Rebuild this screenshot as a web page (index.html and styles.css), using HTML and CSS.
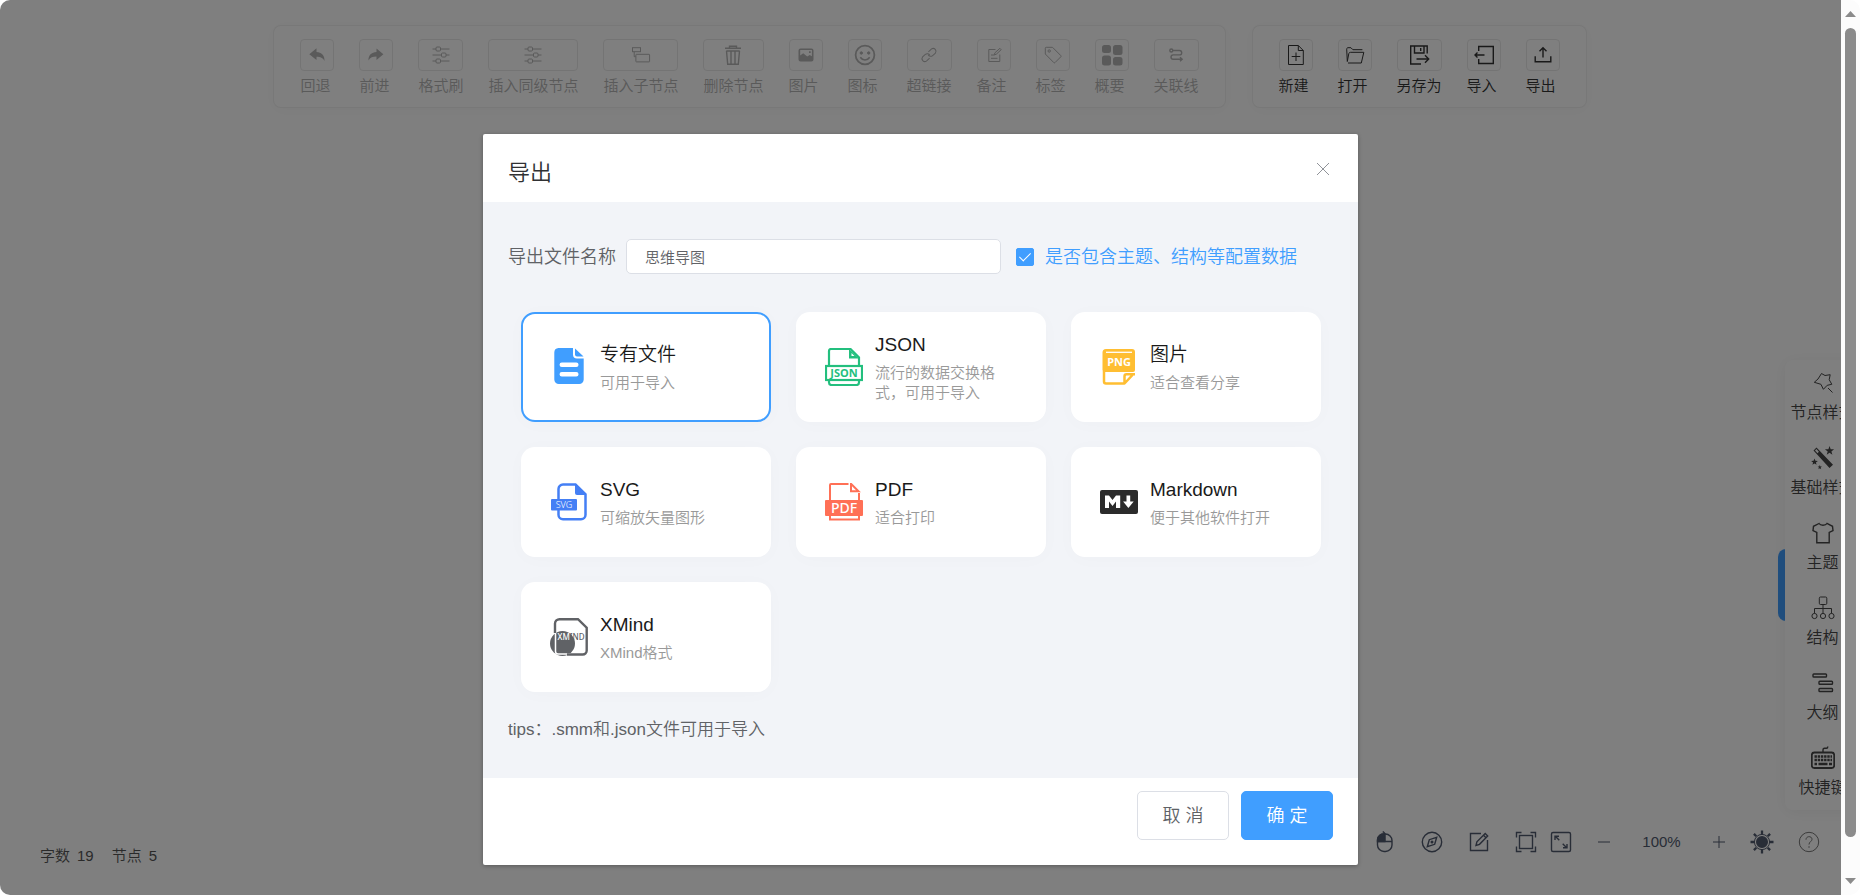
FILE: index.html
```html
<!DOCTYPE html>
<html lang="zh-CN">
<head>
<meta charset="utf-8">
<meta name="viewport" content="width=device-width, initial-scale=1">
<title>思维导图</title>
<link rel="stylesheet" href="styles.css">
</head>
<body>
<div class="app">
  <header class="toolbar">
    <div class="toolbar-block toolbar-disabled">
      <button class="tool" disabled><span class="tool-icon"><svg viewBox="0 0 22 22"><path fill="currentColor" d="M10.500 4.200V8c5 .2 8.300 3.200 8 9-1.600-3.200-4-4.200-8-4.200V16L3.300 10.200z"/></svg></span><span>回退</span></button>
      <button class="tool" disabled><span class="tool-icon"><svg viewBox="0 0 22 22"><path fill="currentColor" d="M11.500 4.500V8c-5 .2-8.200 3.200-8 8.500 1.700-3 4.200-3.900 8-3.900V16l6.900-5.800z"/></svg></span><span>前进</span></button>
      <button class="tool" disabled><span class="tool-icon"><svg viewBox="0 0 22 22" class="line"><path d="M2.500 5H6M10.500 5h9M2.500 11h9M16 11h3.500M2.500 17H6M10.500 17h9"/><rect x="6" y="3" width="4.500" height="4" rx="1"/><rect x="11.500" y="9" width="4.500" height="4" rx="1"/><rect x="6" y="15" width="4.500" height="4" rx="1"/></svg></span><span>格式刷</span></button>
      <button class="tool" disabled><span class="tool-icon"><svg viewBox="0 0 22 22" class="line"><path d="M2.500 5H6M10.500 5h9M2.500 11h9M16 11h3.500M2.500 17H6M10.500 17h9"/><rect x="6" y="3" width="4.500" height="4" rx="1"/><rect x="11.500" y="9" width="4.500" height="4" rx="1"/><rect x="6" y="15" width="4.500" height="4" rx="1"/></svg></span><span>插入同级节点</span></button>
      <button class="tool" disabled><span class="tool-icon"><svg viewBox="0 0 22 22" class="line"><rect x="2.500" y="3.700" width="8" height="4"/><path d="M4.200 7.700v5h1.500"/><rect x="5.900" y="10.300" width="13.700" height="7.600" rx=".5"/></svg></span><span>插入子节点</span></button>
      <button class="tool" disabled><span class="tool-icon"><svg viewBox="0 0 22 22" class="line bold"><path d="M3 4.300h16M7.500 4V2.200h7V4M4.300 7h13.400M4.500 7l1.200 13.300h10.600L17.500 7M9 7.500V20M13 7.500V20"/></svg></span><span>删除节点</span></button>
      <button class="tool" disabled><span class="tool-icon"><svg viewBox="0 0 22 22"><path fill="currentColor" fill-rule="evenodd" d="M5.500 4.500h11a2 2 0 0 1 2 2v9a2 2 0 0 1-2 2h-11a2 2 0 0 1-2-2v-9a2 2 0 0 1 2-2zM5.200 6v5.500l3-2.200 4 3.200 2.500-1.500 2.200 1.200V6zM14 7.200h1.700v1.700H14z"/></svg></span><span>图片</span></button>
      <button class="tool" disabled><span class="tool-icon"><svg viewBox="0 0 22 22" class="line"><circle cx="11" cy="11" r="9.400" stroke-width="1.800"/><circle cx="7.300" cy="9" r="1.200" fill="currentColor"/><circle cx="14.700" cy="9" r="1.200" fill="currentColor"/><path stroke-width="1.600" d="M6.300 13.300c2.400 3.600 7 3.600 9.400 0"/></svg></span><span>图标</span></button>
      <button class="tool" disabled><span class="tool-icon"><svg viewBox="0 0 22 22" class="line"><g transform="rotate(-42 11 11)"><path d="M9.300 13.800H5a2.900 2.900 0 0 1 0-5.700h3.700a2.900 2.900 0 0 1 2.800 3.600"/><path d="M12.700 8.200H17a2.900 2.900 0 0 1 0 5.700h-3.700a2.900 2.900 0 0 1-2.800-3.600"/></g></svg></span><span>超链接</span></button>
      <button class="tool" disabled><span class="tool-icon"><svg viewBox="0 0 22 22" class="line"><path d="M12.500 5.500H5.800v12h11v-7M8 11h3.500M8 14.300h6.500"/><path d="M11.300 10.800l.6-2 5-4.500 1.300 1.400-5 4.600z"/></svg></span><span>备注</span></button>
      <button class="tool" disabled><span class="tool-icon"><svg viewBox="0 0 22 22" class="line"><path d="M3.300 4.200c0-.6.300-.9.900-.9h6.300l8.300 8.300c.4.400.4.800 0 1.200L13 18.600c-.4.400-.8.400-1.200 0L3.300 10z"/><circle cx="7.200" cy="7" r="1.200"/></svg></span><span>标签</span></button>
      <button class="tool" disabled><span class="tool-icon"><svg viewBox="0 0 22 22" fill="currentColor"><rect x="1" y="1" width="9" height="8" rx="2.500"/><rect x="12" y="1" width="9.500" height="10" rx="2.500"/><rect x="1" y="11.500" width="9" height="10" rx="2.500"/><rect x="12" y="13" width="9.500" height="8.500" rx="2.500"/></svg></span><span>概要</span></button>
      <button class="tool" disabled><span class="tool-icon"><svg viewBox="0 0 22 22" class="line bold"><circle cx="6.300" cy="6.500" r="1.500"/><path d="M8 6.500h6.500a2.200 2.200 0 0 1 0 4.400H8.200a2.200 2.200 0 0 0 0 4.400H17M15 13.200l2.200 2.100-2.200 2"/></svg></span><span>关联线</span></button>
    </div>
    <div class="toolbar-block">
      <button class="tool"><span class="tool-icon"><svg viewBox="0 0 22 22" class="line"><path d="M3.500 1.500h9.800l5 5v14h-14.800zM13.300 1.500v5h5M11 8.500v8.500M6.700 12.500h8.600"/></svg></span><span>新建</span></button>
      <button class="tool"><span class="tool-icon"><svg viewBox="0 0 22 22" class="line"><path d="M3.300 17.500l-.6-12.300c0-.8.500-1.500 1.200-1.500h3l2 2h9.500M4 19h13.300l2.500-10.700H6.600c-1 0-1.600.4-1.800 1.300L3.300 17.500"/></svg></span><span>打开</span></button>
      <button class="tool"><span class="tool-icon"><svg viewBox="0 0 22 22" class="line bold"><path d="M13 20H2.700V2h16.500v7.500M6.500 2v7h9.500V2M12.700 4v3M8.500 15h12M17 11.300l3.700 3.700-3.700 3.700"/></svg></span><span>另存为</span></button>
      <button class="tool"><span class="tool-icon"><svg viewBox="0 0 22 22" class="line bold"><path d="M5.700 7V2.500h14.600v17H5.700V15M2 11h9.500M4.500 8.500L2 11l2.500 2.500"/></svg></span><span>导入</span></button>
      <button class="tool"><span class="tool-icon"><svg viewBox="0 0 22 22" class="line bold"><path d="M3.200 12.300v5.500h15.600v-5.500M11 13.500V4M7.500 7.300L11 3.800l3.500 3.500"/></svg></span><span>导出</span></button>
    </div>
  </header>

  <button class="sidebar-toggle" aria-label="收起"></button>
  <nav class="sidebar">
    <button class="side-item"><svg viewBox="0 0 24 24" class="line"><path d="M10.500 2.500l3.500 2 5.200-.8-1 5 2.600 4.600-4.600 1-3.800 4-2.500-5-6.600-2 3.700-3.300zM17 17l4.500 4.500"/></svg><span>节点样式</span></button>
    <button class="side-item"><svg viewBox="0 0 24 24"><path fill="currentColor" fill-rule="evenodd" d="M2.500 4.500l3-3L22 18.800 18.500 22zM4 4.600l2.500 2.600 1.400-1.500-2.500-2.600z"/><path fill="currentColor" d="M18.500 0l1.200 3.200 3.400.1-2.700 2.100 1 3.300-2.900-1.900-2.800 1.900 1-3.300-2.800-2.100 3.500-.1zM3.500 12.500l.9 2.300 2.500.1-2 1.500.7 2.400-2.100-1.400-2.100 1.400.7-2.400-2-1.500 2.500-.1zM8.800 19l.6 1.500 1.600.1-1.300 1 .5 1.600-1.400-.9-1.400.9.500-1.600-1.300-1 1.600-.1z"/></svg><span>基础样式</span></button>
    <button class="side-item"><svg viewBox="0 0 24 24" class="line bold"><path d="M8 2.500L2.500 5.300 2 9.500l3.800 2v10.300h12.400V11.500l3.800-2-.5-4.200L16 2.500c-1.500 2.400-6.500 2.400-8 0z"/></svg><span>主题</span></button>
    <button class="side-item"><svg viewBox="0 0 24 24" class="line"><rect x="8.300" y="1" width="7.500" height="7.500" rx="1.200"/><path d="M12 8.500v9M3.500 17.500v-5h17v5"/><circle cx="3.500" cy="20" r="2.600"/><circle cx="12" cy="20" r="2.600"/><circle cx="20.500" cy="20" r="2.600"/></svg><span>结构</span></button>
    <button class="side-item"><svg viewBox="0 0 24 24" class="line bold"><rect x="2" y="3" width="13.500" height="3" rx=".8"/><rect x="8" y="10.200" width="13.500" height="3" rx=".8"/><rect x="8" y="17.500" width="13.500" height="3" rx=".8"/></svg><span>大纲</span></button>
    <button class="side-item"><svg viewBox="0 0 24 24" class="line bold"><rect x="0.800" y="6.500" width="22.400" height="15.500" rx="2.500" stroke-width="1.800"/><path d="M12 6V3.800c0-1 .5-1.500 1.500-1.500h2c.9 0 1.300-.5 1.300-1.800"/><path stroke-width="2.300" stroke-dasharray="2.400 .8" d="M3.500 10.500h17.500M3.500 14h17.500"/><path stroke-width="2.300" d="M3.500 18H6M7.500 18h9M18 18h3"/></svg><span>快捷键</span></button>
  </nav>

  <div class="counter"><span class="count">字数 <span>19</span></span><span class="count">节点 <span>5</span></span></div>

  <div class="navigator">
    <button class="nav-btn" aria-label="鼠标"><svg viewBox="0 0 24 24" class="line bold"><rect x="4.500" y="4" width="14.500" height="17.500" rx="6.500"/><path d="M4.500 11.500h14.500M11.800 4v7.500M11.800 4c0-1.500-1-1.500-2-2.500"/><path fill="currentColor" d="M4.500 11.500v-2a6 6 0 0 1 7.300-5.500v7.500z"/></svg></button>
    <button class="nav-btn" aria-label="定位"><svg viewBox="0 0 24 24" class="line bold"><circle cx="12" cy="12" r="9.700"/><path d="M16.700 7.300l-2 7-7.400 2.400 2-7z"/><circle cx="12" cy="12" r=".8"/></svg></button>
    <button class="nav-btn" aria-label="编辑"><svg viewBox="0 0 24 24" class="line bold"><path d="M14 3.500H3.500v17h17V10"/><path d="M9 15.500l.9-3.700 8.300-8.300 2.500 2.500-8.200 8.300zM16.500 5.300l2.500 2.500"/></svg></button>
    <span class="nav-pair">
      <button class="nav-btn" aria-label="适应画布"><svg viewBox="0 0 24 24" class="line bold"><path d="M2.500 7.500v-5h5M16.500 2.500h5v5M21.500 16.500v5h-5M7.500 21.500h-5v-5"/><rect x="5.500" y="5.500" width="13" height="13"/></svg></button>
      <button class="nav-btn" aria-label="全屏"><svg viewBox="0 0 24 24" class="line bold"><rect x="2.500" y="2.500" width="19" height="19" rx="1.500"/><path d="M6 10V6.300h4M6.300 6.300l4 4M18 14v3.700h-4M17.700 17.700l-4-4"/></svg></button>
    </span>
    <span class="zoom">
      <button class="zoom-btn" aria-label="缩小"><svg viewBox="0 0 16 16" class="line"><path d="M2 8h12"/></svg></button>
      <span class="zoom-value">100%</span>
      <button class="zoom-btn" aria-label="放大"><svg viewBox="0 0 16 16" class="line"><path d="M2 8h12M8 2v12"/></svg></button>
    </span>
    <button class="nav-btn" aria-label="主题"><svg viewBox="0 0 24 24" class="line bold"><circle cx="12" cy="12" r="5.300" fill="currentColor"/><circle cx="12" cy="12" r="7.600" stroke-width="1"/><path stroke-width="2.300" d="M12 .5v3.500M12 20v3.500M.5 12H4M20 12h3.500M3.900 3.900l2.400 2.400M17.700 17.700l2.400 2.400M20.100 3.900l-2.400 2.400M6.300 17.700l-2.400 2.400"/></svg></button>
    <button class="nav-btn nav-help" aria-label="帮助"><svg viewBox="0 0 24 24" class="line"><circle cx="12" cy="12" r="9.700"/><path d="M9 9.700c0-4 6-4 6-.4 0 2.200-3 2.400-3 5.200M12 16.200v1.600"/></svg></button>
  </div>

  <div class="mask">
    <form class="dialog" role="dialog" aria-labelledby="dialog-title">
      <div class="dialog-header">
        <h1 class="dialog-title" id="dialog-title">导出</h1>
        <button type="button" class="dialog-close" aria-label="关闭"><svg viewBox="0 0 16 16" class="line"><path d="M2 2l12 12M14 2L2 14"/></svg></button>
      </div>
      <div class="dialog-body">
        <div class="name-row">
          <label for="file-name">导出文件名称</label>
          <input class="name-input" id="file-name" type="text" value="思维导图">
          <label class="check"><input class="check-box" type="checkbox" checked><span>是否包含主题、结构等配置数据</span></label>
        </div>
        <div class="cards">
          <label class="card">
            <input class="card-radio" type="radio" name="type" checked>
            <svg class="card-icon" viewBox="0 0 38 38"><path fill="#409eff" d="M8.500 0H23v6.500a4 4 0 0 0 4 4h6.700V31.500a4.500 4.500 0 0 1-4.500 4.500H8.800a4.500 4.500 0 0 1-4.500-4.500V4.500A4.500 4.500 0 0 1 8.500 0z"/><path fill="#409eff" d="M25 .5L33.500 8.500H27a2 2 0 0 1-2-2z"/><path stroke="#fff" stroke-width="4.500" stroke-linecap="round" d="M11.800 16.700h14.500M11.800 26.200h14.500"/></svg>
            <span class="card-text"><span class="card-name">专有文件</span><span class="card-desc">可用于导入</span></span>
          </label>
          <label class="card">
            <input class="card-radio" type="radio" name="type">
            <svg class="card-icon" viewBox="0 0 38 38"><g fill="none" stroke="#23bf7e" stroke-width="2.200"><path d="M4 17.500V3a2 2 0 0 1 2-2h19.500l8.500 8.500v8M4 32v2.500A2.500 2.500 0 0 0 6.500 37h25a2.500 2.500 0 0 0 2.500-2.500V32"/><rect x="1" y="18" width="36" height="14"/></g><path fill="#23bf7e" d="M24 1l10 9.500H24zM26.500 5v3h3z" fill-rule="evenodd"/><text class="icon-text" x="19" y="29" font-size="11" font-weight="700" fill="#23bf7e">JSON</text></svg>
            <span class="card-text"><span class="card-name">JSON</span><span class="card-desc">流行的数据交换格式，可用于导入</span></span>
          </label>
          <label class="card">
            <input class="card-radio" type="radio" name="type">
            <svg class="card-icon" viewBox="0 0 38 38"><path fill="#ffbe32" d="M6 1h26a3 3 0 0 1 3 3v18a2 2 0 0 1-2 2H4.500a2 2 0 0 1-2-2V4.500A3.500 3.500 0 0 1 6 1z"/><path stroke="#fff" stroke-width="1.300" d="M6 4.300h26"/><path fill="none" stroke="#ffbe32" stroke-width="2.500" stroke-linejoin="round" d="M4 23v10.500a2 2 0 0 0 2 2h18.500l8-8.500M24.500 35.500v-7.300a2 2 0 0 1 2-2H35"/><text class="icon-text" x="19" y="18" font-size="11" font-weight="700" fill="#fff">PNG</text></svg>
            <span class="card-text"><span class="card-name">图片</span><span class="card-desc">适合查看分享</span></span>
          </label>
          <label class="card">
            <input class="card-radio" type="radio" name="type">
            <svg class="card-icon" viewBox="0 0 38 38"><path fill="none" stroke="#447ff5" stroke-width="2.500" d="M8.500 17V6a4.500 4.500 0 0 1 4.500-4.500h12.500L35.500 11.300v20.500a4.500 4.500 0 0 1-4.500 4.500H13a4.500 4.500 0 0 1-4.500-4.500V27"/><path fill="#447ff5" d="M25 1.500L35.500 12H27a2 2 0 0 1-2-2z"/><rect x="1" y="16" width="26" height="11.500" rx="1" fill="#447ff5"/><text class="icon-text" x="14" y="25" font-size="9" fill="#fff">SVG</text></svg>
            <span class="card-text"><span class="card-name">SVG</span><span class="card-desc">可缩放矢量图形</span></span>
          </label>
          <label class="card">
            <input class="card-radio" type="radio" name="type">
            <svg class="card-icon" viewBox="0 0 38 38"><path fill="none" stroke="#ff7056" stroke-width="2" d="M5 18V2a1 1 0 0 1 1-1h17.500M34 10v8M5 33v3.500h29V33M26 .8v7.500h7.500z"/><rect y="17" width="38" height="16" rx="1" fill="#ff7056"/><text class="icon-text" x="19" y="30" font-size="14" font-weight="500" fill="#fff">PDF</text></svg>
            <span class="card-text"><span class="card-name">PDF</span><span class="card-desc">适合打印</span></span>
          </label>
          <label class="card">
            <input class="card-radio" type="radio" name="type">
            <svg class="card-icon" viewBox="0 0 38 38"><rect y="7" width="38" height="24" rx="2" fill="#2b2b2b"/><path fill="#fff" d="M5 25V12.500h4l3.500 4.500 3.500-4.500h4.200V25h-4.200v-6.500L12.500 23 9 18.500V25zM26.500 12.500h3.700v6h3.500l-5.300 6.500-5.300-6.500h3.400z"/></svg>
            <span class="card-text"><span class="card-name">Markdown</span><span class="card-desc">便于其他软件打开</span></span>
          </label>
          <label class="card">
            <input class="card-radio" type="radio" name="type">
            <svg class="card-icon" viewBox="0 0 38 38"><circle cx="12.500" cy="25.500" r="12.500" fill="#606266"/><path fill="none" stroke="#fff" stroke-width="1.500" d="M5.500 13v20.500c0 1.500 1 2.500 2.500 2.500h13"/><path fill="none" stroke="#606266" stroke-width="2.400" d="M5 15V5.500A4.500 4.500 0 0 1 9.500 1.200H28l8.700 8.500V32.500a4 4 0 0 1-4 4H17"/><text font-family="Noto Sans, sans-serif" x="7.500" y="21.500" font-size="8" font-weight="500"><tspan fill="#fff">XM</tspan><tspan fill="#606266">IND</tspan></text></svg>
            <span class="card-text"><span class="card-name">XMind</span><span class="card-desc">XMind格式</span></span>
          </label>
        </div>
        <p class="tips">tips：.smm和.json文件可用于导入</p>
      </div>
      <div class="dialog-footer">
        <button type="button" class="btn">取 消</button>
        <button type="button" class="btn btn-primary">确 定</button>
      </div>
    </form>
  </div>

  <div class="scrollbar" aria-hidden="true">
    <svg class="scroll-arrow" viewBox="0 0 11 6"><path d="M0 6L5.500 0 11 6z"/></svg>
    <div class="scroll-thumb"></div>
    <svg class="scroll-arrow" viewBox="0 0 11 6"><path d="M0 0l5.500 6L11 0z"/></svg>
  </div>
</div>
</body>
</html>
```
FILE: styles.css
```css
* { box-sizing: border-box; }

body {
  margin: 0;
  background: #fff;
  color: #606266;
  font: 15px/20px "Liberation Sans", "Noto Sans CJK SC", sans-serif;
  font-weight: 350;
}

button {
  padding: 0;
  border: 0;
  background: none;
  color: inherit;
  font: inherit;
}

svg { display: block; }

.line {
  fill: none;
  stroke: currentColor;
  stroke-width: 1;
}

.line.bold { stroke-width: 1.4; }

.app {
  position: relative;
  height: 100vh;
  min-height: 780px;
  overflow: hidden;
  border-radius: 10px;
}

/* top toolbar */
.toolbar {
  display: flex;
  justify-content: center;
  gap: 26px;
  padding-top: 25px;
}

.toolbar-block {
  display: flex;
  gap: 25px;
  padding: 13px 26px 11px;
  border: 1px solid rgba(0, 0, 0, 0.06);
  border-radius: 8px;
  background: #fff;
  box-shadow: 0 2px 16px rgba(0, 0, 0, 0.03);
  color: #333;
}

.toolbar-disabled { color: #b4b4b4; }

.tool {
  display: flex;
  flex-direction: column;
  align-items: flex-start;
  gap: 5px;
  min-width: 34px;
  white-space: nowrap;
}

.tool-icon {
  display: flex;
  align-items: center;
  justify-content: center;
  align-self: stretch;
  height: 32px;
  border: 1px solid #e9e9e9;
  border-radius: 4px;
}

.tool-icon svg { width: 22px; height: 22px; }

/* right sidebar */
.sidebar {
  position: absolute;
  top: 360px;
  right: 0;
  display: flex;
  flex-direction: column;
  width: 75px;
  border-radius: 8px 0 0 8px;
  background: #fff;
  box-shadow: 0 2px 16px rgba(0, 0, 0, 0.06);
  color: #464646;
  font-size: 16px;
}

.side-item {
  display: flex;
  flex-direction: column;
  align-items: center;
  gap: 8px;
  height: 75px;
  padding-top: 11px;
  white-space: nowrap;
}

.side-item svg { width: 24px; height: 24px; }

.sidebar-toggle {
  position: absolute;
  top: 549px;
  right: 67px;
  width: 15px;
  height: 72px;
  border-radius: 8px 0 0 8px;
  background: #409eff;
}

/* bottom bars */
.counter {
  position: absolute;
  bottom: 29px;
  left: 40px;
  display: flex;
  gap: 18px;
  color: #555;
}

.count {
  display: flex;
  gap: 7px;
}

.navigator {
  position: absolute;
  right: 39px;
  bottom: 41px;
  display: flex;
  align-items: center;
  gap: 23px;
  color: #515a6e;
}

.nav-btn svg { width: 24px; height: 24px; }
.nav-help { color: #777; }
.nav-pair { display: flex; gap: 11px; }
.zoom { display: flex; align-items: center; }
.zoom-btn svg { width: 16px; height: 16px; }
.zoom-value { width: 99px; text-align: center; }

/* dialog */
.mask {
  position: absolute;
  inset: 0 19px 0 0;
  padding-top: 134px;
  background: rgba(0, 0, 0, 0.5);
}

.dialog {
  width: 875px;
  max-width: 100%;
  margin: 0 auto;
  overflow: hidden;
  border-radius: 2px;
  background: #fff;
  box-shadow: 0 1px 4px rgba(0, 0, 0, 0.3);
}

.dialog-header {
  display: flex;
  justify-content: space-between;
  padding: 25px 27px 15px 25px;
}

.dialog-title {
  margin: 0;
  color: #303133;
  font-size: 22px;
  font-weight: 350;
  line-height: 28px;
}

.dialog-close {
  align-self: flex-start;
  padding-top: 2px;
  color: #909399;
}

.dialog-close svg { width: 16px; height: 16px; }

.dialog-body {
  padding: 37px 25px 34px;
  background: #f2f4f8;
  font-size: 18px;
  line-height: 28px;
}

.name-row {
  display: flex;
  align-items: center;
  margin-bottom: 38px;
}

.name-input {
  width: 375px;
  height: 35px;
  margin: 0 15px 0 10px;
  padding: 0 18px;
  border: 1px solid #dcdfe6;
  border-radius: 5px;
  background: #fff;
  color: #606266;
  font: inherit;
  font-size: 15px;
}

.check {
  display: flex;
  align-items: center;
  gap: 11px;
  color: #409eff;
}

.check-box {
  appearance: none;
  display: flex;
  justify-content: center;
  width: 18px;
  height: 18px;
  margin: 0;
  border: 1px solid #409eff;
  border-radius: 2px;
}

.check-box:checked { background: #409eff; }

.check-box:checked::after {
  content: "";
  width: 5px;
  height: 10px;
  margin-top: 1px;
  border: solid #fff;
  border-width: 0 1px 1px 0;
  transform: rotate(45deg);
}

.cards {
  display: grid;
  grid-template-columns: repeat(3, 1fr);
  gap: 25px;
  padding: 0 12px 0 13px;
}

.card {
  position: relative;
  display: flex;
  align-items: center;
  gap: 12px;
  height: 110px;
  padding: 0 36px 0 27px;
  border: 2px solid transparent;
  border-radius: 14px;
  background: #fff;
  box-shadow: 0 2px 20px rgba(0, 0, 0, 0.02);
}

.card:has(:checked) { border-color: #409eff; }

.card-radio {
  position: absolute;
  opacity: 0;
}

.card-icon {
  flex: none;
  width: 38px;
  height: 38px;
}

.icon-text {
  font-family: "Noto Sans", sans-serif;
  text-anchor: middle;
}

.card-text {
  display: flex;
  flex-direction: column;
  gap: 6px;
}

.card-name {
  color: #1a1a1a;
  font-size: 19px;
  line-height: 25px;
}

.card-desc {
  color: #999;
  font-size: 15px;
  line-height: 20px;
}

.tips {
  margin: 24px 0 0;
  font-size: 17px;
}

.dialog-footer {
  display: flex;
  justify-content: flex-end;
  gap: 12px;
  padding: 13px 25px 25px;
}

.btn {
  width: 92px;
  height: 49px;
  border: 1px solid #dcdfe6;
  border-radius: 5px;
  background: #fff;
  color: #606266;
  font-size: 18px;
}

.btn-primary {
  border-color: #409eff;
  background: #409eff;
  color: #fff;
}

/* page scrollbar */
.scrollbar {
  position: absolute;
  inset: 0 0 0 auto;
  display: flex;
  flex-direction: column;
  align-items: center;
  gap: 11px;
  width: 19px;
  padding: 11px 0;
  background: #fcfcfc;
}

.scroll-arrow {
  width: 11px;
  height: 6px;
  fill: #8b8b8b;
}

.scroll-thumb {
  width: 11px;
  height: 809px;
  margin-bottom: auto;
  border-radius: 6px;
  background: #8b8b8b;
}
```
